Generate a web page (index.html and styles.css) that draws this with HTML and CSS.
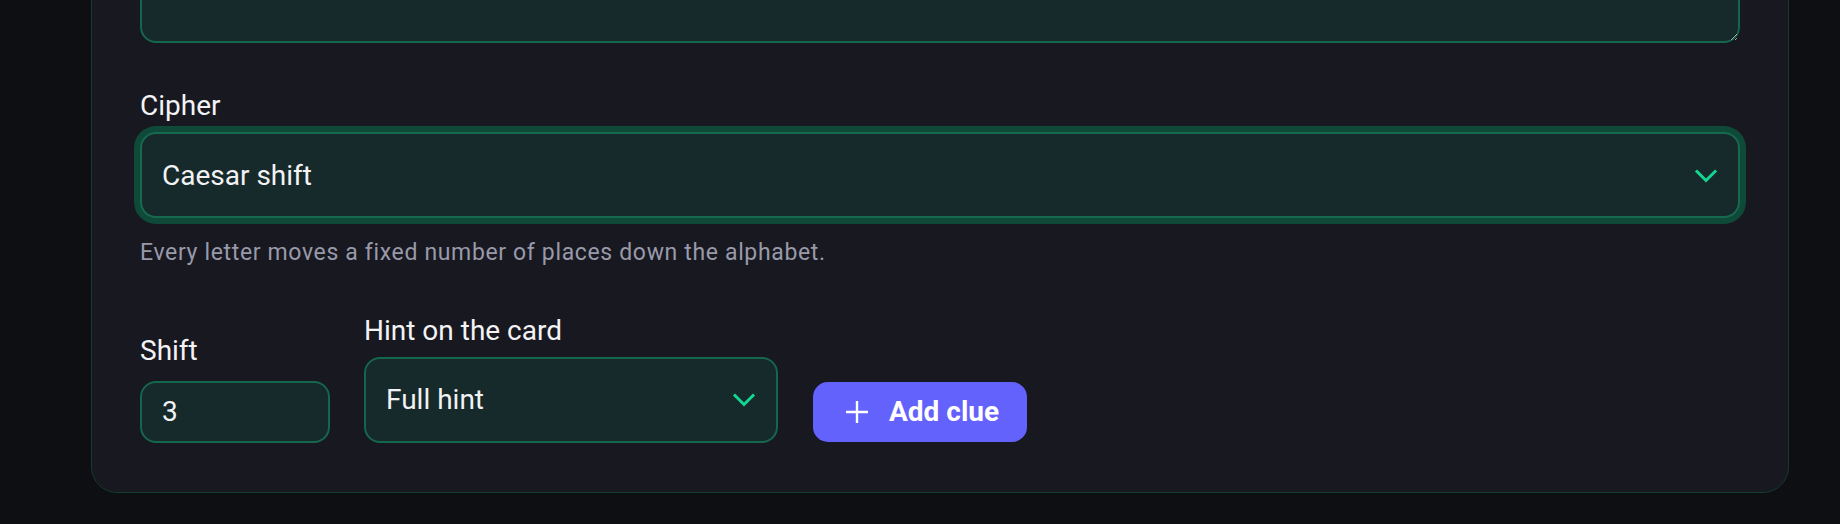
FILE: index.html
```html
<!DOCTYPE html>
<html lang="en">
<head>
<meta charset="utf-8">
<title>Add clue</title>
<link rel="stylesheet" href="styles.css">
</head>
<body>
<main class="card">
  <div class="field">
    <textarea class="textarea" aria-label="Message"></textarea>
  </div>

  <div class="field field-gap">
    <label class="label">Cipher</label>
    <div class="select select-focus">
      <span class="select-value">Caesar shift</span>
      <svg class="chev" viewBox="0 0 24 24" width="36" height="36" aria-hidden="true"><path d="m6 9 6 6 6-6"/></svg>
    </div>
    <p class="help">Every letter moves a fixed number of places down the alphabet.</p>
  </div>

  <div class="row">
    <div class="col col-shift">
      <label class="label label-shift">Shift</label>
      <div class="input">3</div>
    </div>
    <div class="col col-hint">
      <label class="label">Hint on the card</label>
      <div class="select select-hint">
        <span class="select-value">Full hint</span>
        <svg class="chev" viewBox="0 0 24 24" width="36" height="36" aria-hidden="true"><path d="m6 9 6 6 6-6"/></svg>
      </div>
    </div>
    <button class="btn" type="button">
      <svg class="plus" viewBox="0 0 22 22" width="22" height="22" aria-hidden="true"><path d="M0 11h22M11 0v22"/></svg>
      <span>Add clue</span>
    </button>
  </div>
</main>
</body>
</html>
```

FILE: styles.css
```css
* { box-sizing: border-box; }

html, body {
  margin: 0;
  padding: 0;
  background: #0e0f12;
  font-family: "Roboto", "Liberation Sans", sans-serif;
  color: #f3f3f5;
  overflow: hidden;
}

.card {
  margin: -166px 0 0 91px;
  width: 1698px;
  background: #181820;
  border: 1px solid #133b2f;
  border-radius: 26px;
  padding: 48px 48px 49px;
}

.field { display: block; }
.field-gap { margin-top: 47px; }

.textarea {
  display: block;
  width: 100%;
  height: 160px;
  background: #16292b;
  border: 2px solid #14674c;
  border-radius: 16px;
  resize: vertical;
  color-scheme: dark;
  outline: none;
  font: inherit;
}

.label {
  display: block;
  font-size: 28px;
  line-height: 32px;
  font-weight: 400;
  color: #f3f3f5;
  margin-bottom: 10px;
}
.label-shift { margin-bottom: 14px; }

.select {
  display: flex;
  align-items: center;
  justify-content: space-between;
  height: 86px;
  padding: 2px 14px 0 20px;
  background: #16292b;
  border: 2px solid #14674c;
  border-radius: 16px;
  font-size: 28px;
  line-height: 32px;
  color: #f2f2f3;
}
.select-focus {
  border-color: #17694f;
  box-shadow: 0 0 0 6px #0f4a39;
}
.select-hint { padding-top: 0; }

.chev {
  flex: none;
  fill: none;
  stroke: #14d690;
  stroke-width: 2;
  stroke-linecap: square;
  stroke-linejoin: miter;
}

.help {
  margin: 20px 0 0;
  font-size: 23px;
  line-height: 30px;
  letter-spacing: 0.65px;
  color: #989aaa;
}

.row {
  display: flex;
  align-items: flex-end;
  gap: 34px;
  margin-top: 47px;
}

.col-shift { width: 190px; }
.col-hint { width: 414px; }

.input {
  display: flex;
  align-items: center;
  height: 62px;
  padding: 0 20px;
  background: #16292b;
  border: 2px solid #14674c;
  border-radius: 16px;
  font-size: 28px;
  line-height: 32px;
  color: #f2f2f3;
}

.btn {
  display: inline-flex;
  align-items: center;
  gap: 21px;
  height: 60px;
  margin: 0 0 1px 1px;
  padding: 0 28px 0 33px;
  background: #6462fd;
  border: none;
  border-radius: 15px;
  font-family: inherit;
  font-size: 28px;
  line-height: 32px;
  font-weight: 700;
  color: #ffffff;
}

.plus {
  flex: none;
  fill: none;
  stroke: #ffffff;
  stroke-width: 2.4;
}
```
